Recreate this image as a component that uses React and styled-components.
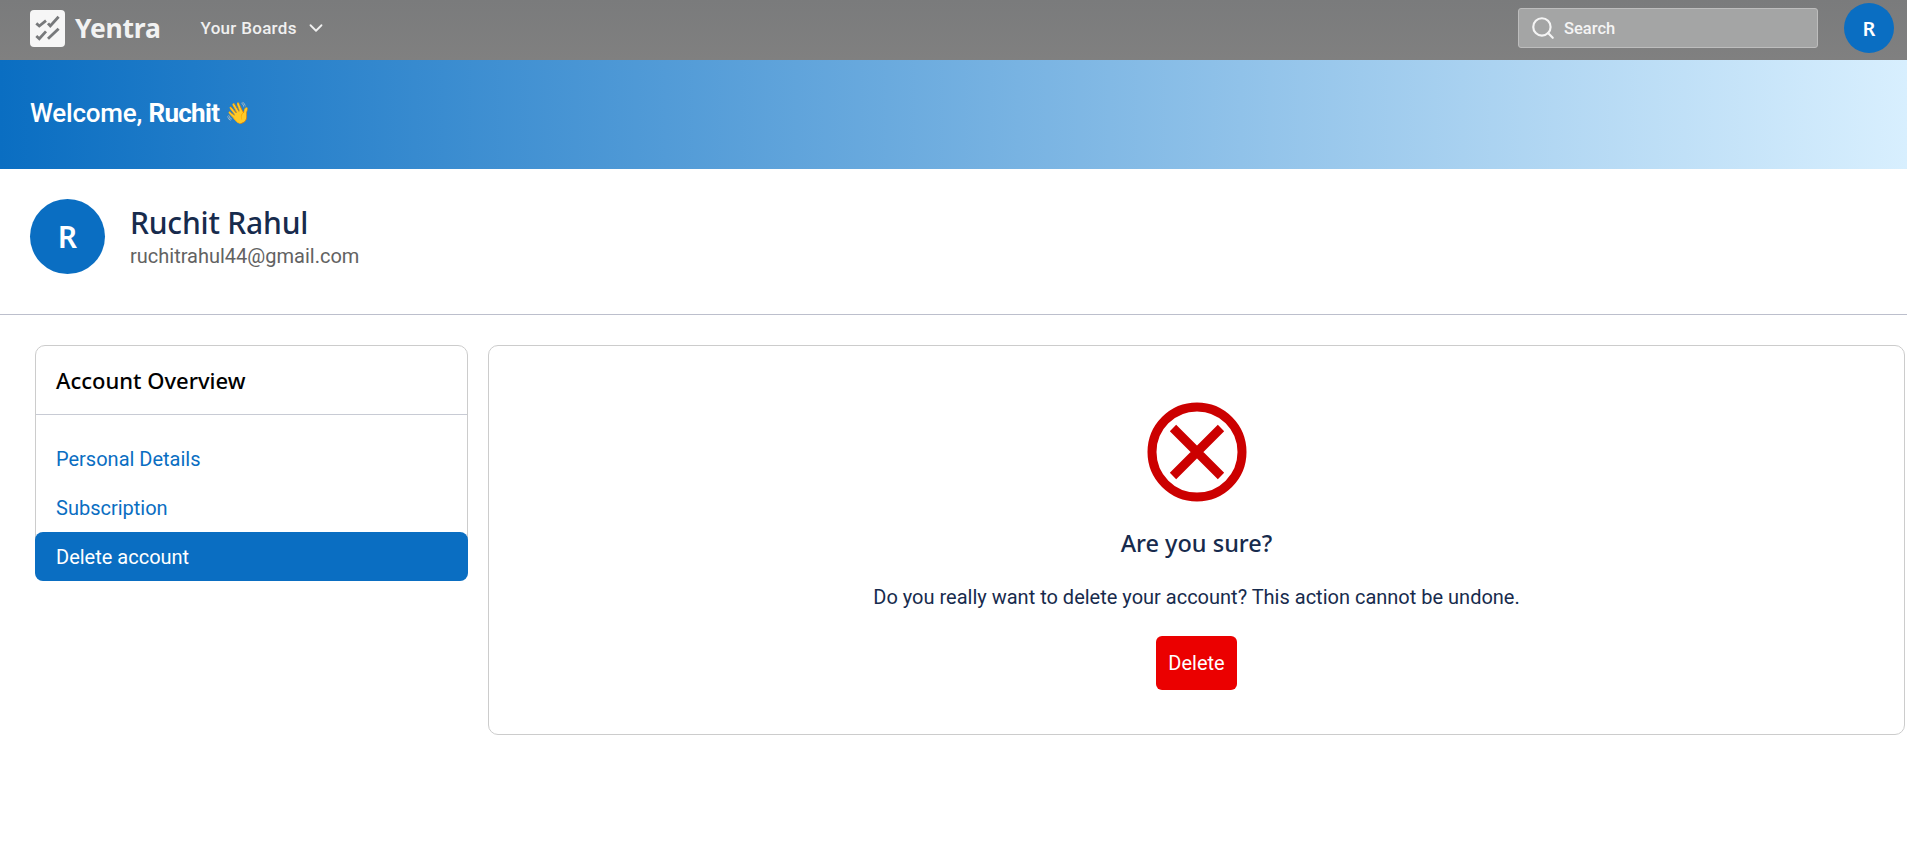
import React from "react";
import styled, { createGlobalStyle } from "styled-components";
import { Search, ChevronDown } from "lucide-react";

const GlobalStyle = createGlobalStyle`
    html, body {
        margin: 0;
        padding: 0;
        background: #fff;
        font-family: Roboto, "Liberation Sans", sans-serif;
    }
    * {
        box-sizing: border-box;
    }
`;

const Page = styled.div`
    width: 100%;
    min-height: 853px;
    background: #fff;
`;

const Navbar = styled.header`
    height: 60px;
    padding: 0 13px 4px 30px;
    display: flex;
    align-items: center;
    justify-content: space-between;
    background: linear-gradient(180deg, #7a7b7c 0%, #808080 100%);
    color: #fff;
`;
const NavLeft = styled.div`
    display: flex;
    align-items: center;
`;
const NavRight = styled.div`
    display: flex;
    align-items: center;
    gap: 26px;
`;
const Logo = styled.div`
    display: flex;
    align-items: center;
    gap: 10px;
    margin-right: 40px;
`;
const LogoName = styled.span`
    font-family: "Noto Sans", sans-serif;
    font-size: 26.5px;
    font-weight: 700;
    letter-spacing: -0.25px;
    color: #f2f2f2;
`;
const BoardsButton = styled.div`
    display: flex;
    align-items: center;
    gap: 8px;
    font-size: 17px;
    font-weight: 500;
    letter-spacing: 0.3px;
    color: #f0f0f0;
`;
const SearchBox = styled.div`
    width: 300px;
    height: 40px;
    padding: 0 11px;
    display: flex;
    align-items: center;
    gap: 8px;
    background: #a4a5a5;
    border: 1px solid #bdbdbd;
    border-radius: 3px;
    font-size: 16.5px;
    font-weight: 500;
    color: #f4f4f4;
`;
const Avatar = styled.div`
    width: ${(p) => p.$size}px;
    height: ${(p) => p.$size}px;
    border-radius: 50%;
    flex-shrink: 0;
    display: flex;
    align-items: center;
    justify-content: center;
    background: #0a6ec2;
    color: #fff;
    font-family: "Noto Sans", sans-serif;
    font-weight: 600;
    font-size: ${(p) => p.$font}px;
`;

const WelcomeBanner = styled.section`
    height: 109px;
    padding: 0 30px 3px;
    display: flex;
    align-items: center;
    gap: 6px;
    background: linear-gradient(90deg, #0a6ec2 0%, #d8effe 100%);
    color: #fff;
    font-size: 26px;
    font-weight: 500;
    letter-spacing: -0.2px;
`;
const WelcomeName = styled.strong`
    font-weight: 700;
    letter-spacing: -0.7px;
`;
const WaveEmoji = styled.span`
    font-size: 21px;
`;

const ProfileRow = styled.section`
    height: 146px;
    padding: 30px 30px 0;
    display: flex;
    gap: 25px;
    border-bottom: 1px solid #bcbfcc;
`;
const ProfileText = styled.div`
    padding-top: 5px;
`;
const ProfileName = styled.h1`
    margin: 0;
    font-family: "Noto Sans", sans-serif;
    font-size: 30px;
    line-height: 38px;
    font-weight: 500;
    letter-spacing: -0.2px;
    color: #172b4d;
`;
const ProfileEmail = styled.div`
    font-size: 20px;
    line-height: 28px;
    color: #626262;
`;

const Content = styled.main`
    padding: 30px 2px 0 35px;
    display: grid;
    grid-template-columns: 433px 1fr;
    gap: 20px;
    align-items: start;
`;
const Sidebar = styled.aside`
    border: 1px solid #cccccc;
    border-radius: 10px;
`;
const SidebarTitle = styled.h2`
    margin: 0;
    height: 69px;
    padding: 0 20px;
    display: flex;
    align-items: center;
    border-bottom: 1px solid #c8cbd4;
    font-family: "Noto Sans", sans-serif;
    font-size: 22px;
    font-weight: 500;
    color: #000;
`;
const SidebarList = styled.nav`
    padding-top: 19px;
    margin: 0 -1px -1px;
`;
const SidebarItem = styled.div`
    height: 49px;
    padding: 0 21px;
    display: flex;
    align-items: center;
    border-radius: 8px;
    font-size: 20px;
    background: ${(p) => (p.$active ? "#0a6ec2" : "transparent")};
    color: ${(p) => (p.$active ? "#fff" : "#0a6ec2")};
`;

const DeletePanel = styled.section`
    height: 390px;
    padding-top: 56px;
    display: flex;
    flex-direction: column;
    align-items: center;
    border: 1px solid #cccccc;
    border-radius: 10px;
`;
const PanelTitle = styled.h3`
    margin: 25px 0 0;
    font-family: "Noto Sans", sans-serif;
    font-size: 23.5px;
    line-height: 32px;
    font-weight: 500;
    color: #172b4d;
`;
const PanelText = styled.p`
    margin: 26px 0 0;
    font-size: 20px;
    line-height: 24px;
    color: #172b4d;
`;
const DeleteButton = styled.button`
    margin-top: 27px;
    width: 81px;
    height: 54px;
    border: 0;
    border-radius: 6px;
    background: #eb0000;
    color: #fff;
    font-family: inherit;
    font-size: 20px;
`;

const LogoMark = () => (
    <svg width="35" height="37" viewBox="0 0 35 37">
        <rect width="35" height="37" rx="4" fill="#f6f6f6" />
        <g fill="none" stroke="#77797b" strokeWidth="2.8">
            <path d="M6.3 13.4l3 2.6 6.7-5.3" />
            <path d="M18 13.4l2.3 2.6 8.3-9.3" />
            <path d="M6.3 26l3 2.7 6.7-7.3" />
            <path d="M18 28.7l10.6-10" />
        </g>
    </svg>
);

const CrossCircle = () => (
    <svg width="100" height="100" viewBox="0 0 100 100">
        <circle cx="50" cy="50" r="45" fill="none" stroke="#cc0000" strokeWidth="9" />
        <path d="M26 26l48 48M74 26l-48 48" stroke="#cc0000" strokeWidth="9" />
    </svg>
);

const App = () => {
    return (
        <Page>
            <GlobalStyle />
            <Navbar>
                <NavLeft>
                    <Logo>
                        <LogoMark />
                        <LogoName>Yentra</LogoName>
                    </Logo>
                    <BoardsButton>
                        Your Boards
                        <ChevronDown size={22} strokeWidth={2} />
                    </BoardsButton>
                </NavLeft>
                <NavRight>
                    <SearchBox>
                        <Search size={26} strokeWidth={2} />
                        Search
                    </SearchBox>
                    <Avatar $size={50} $font={20}>R</Avatar>
                </NavRight>
            </Navbar>
            <WelcomeBanner>
                <span>Welcome, <WelcomeName>Ruchit</WelcomeName></span>
                <WaveEmoji>👋</WaveEmoji>
            </WelcomeBanner>
            <ProfileRow>
                <Avatar $size={75} $font={30}>R</Avatar>
                <ProfileText>
                    <ProfileName>Ruchit Rahul</ProfileName>
                    <ProfileEmail>ruchitrahul44@gmail.com</ProfileEmail>
                </ProfileText>
            </ProfileRow>
            <Content>
                <Sidebar>
                    <SidebarTitle>Account Overview</SidebarTitle>
                    <SidebarList>
                        <SidebarItem>Personal Details</SidebarItem>
                        <SidebarItem>Subscription</SidebarItem>
                        <SidebarItem $active>Delete account</SidebarItem>
                    </SidebarList>
                </Sidebar>
                <DeletePanel>
                    <CrossCircle />
                    <PanelTitle>Are you sure?</PanelTitle>
                    <PanelText>Do you really want to delete your account? This action cannot be undone.</PanelText>
                    <DeleteButton>Delete</DeleteButton>
                </DeletePanel>
            </Content>
        </Page>
    );
};

export default App;
